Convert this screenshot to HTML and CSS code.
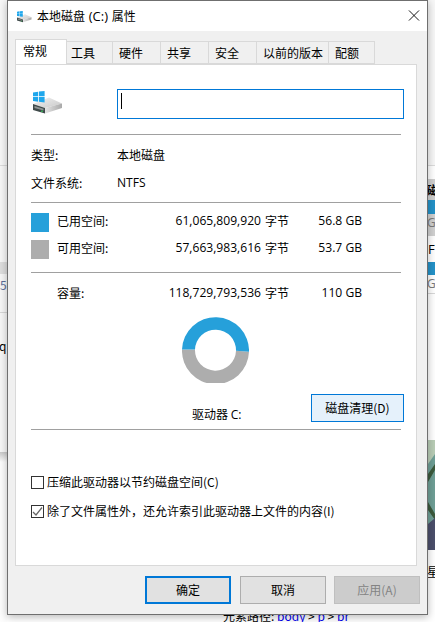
FILE: index.html
```html
<!DOCTYPE html>
<html lang="zh-CN">
<head>
<meta charset="utf-8">
<title>本地磁盘 (C:) 属性</title>
<link rel="stylesheet" href="styles.css">
</head>
<body>
<svg class="defs" width="0" height="0" aria-hidden="true">
  <defs>
    <linearGradient id="topface" x1="0" y1="0" x2="1" y2="1"><stop offset="0" stop-color="#f2f2f2"/><stop offset="1" stop-color="#c9c9c9"/></linearGradient>
    <linearGradient id="sideface" x1="0" y1="0" x2="1" y2="0"><stop offset="0" stop-color="#e4e4e4"/><stop offset="1" stop-color="#a9a9a9"/></linearGradient>
    <symbol id="drive" viewBox="0 0 30 24">
      <path fill="url(#topface)" d="M0 13 16 6.500 29 12.500 12 17z"/>
      <path fill="#3f4a4a" d="M0 13 12 17V22.500L0 19z"/>
      <path fill="#8f9595" d="M1.500 15 10.500 17.800V19.500L1.500 17z"/>
      <path fill="url(#sideface)" d="M12 17 29 12.500V17L12 22.500z"/>
      <path fill="#3aa655" d="M8 19.500h2v1.500H8z"/>
      <path fill="#1fa7ec" d="M0 1.500 5.200.7V5.300H0zM6 .6 11.600 0V5.300H6zM0 6.100H5.200V10.700L0 10zM6 6.100H11.600V11.500L6 10.800z"/>
    </symbol>
  </defs>
</svg>

<div class="backdrop-left">
  <div class="bl-a"></div>
  <div class="bl-b"></div>
  <div class="bl-band"></div>
  <div class="bl-cell"><span class="bl-five">5</span></div>
  <div class="bl-cell2"><span class="bl-q">q</span></div>
  <div class="bl-end"></div>
</div>

<div class="backdrop-right">
  <div class="br-a"></div>
  <div class="br-b"></div>
  <div class="br-head"><span>磁盘</span></div>
  <div class="br-blue br-blue1"></div>
  <div class="br-gb br-gb1"><span>GB</span></div>
  <div class="br-f"><span>F:</span></div>
  <div class="br-blue"></div>
  <div class="br-gb"><span>GB</span></div>
  <div class="br-gap"></div>
  <svg class="br-photo" viewBox="0 0 8 110" preserveAspectRatio="none" aria-hidden="true">
    <rect width="8" height="110" fill="#6f9f96"/>
    <path fill="#b9cdb6" d="M0 0H8V14L0 24z"/>
    <path fill="#3c5a3d" d="M0 34 8 24V30L0 42zM0 62 8 74V80L0 70z"/>
    <path fill="#4b4f6b" d="M0 84 8 78V110H0z"/>
  </svg>
  <div class="br-star"><span>星信</span></div>
</div>

<div class="pathbar">元素路径: <a class="crumb">body</a> &gt; <a class="crumb">p</a> &gt; <a class="crumb">br</a></div>

<main class="window">
  <header class="titlebar">
    <svg class="title-icon" aria-hidden="true"><use href="#drive"/></svg>
    <span class="title-text">本地磁盘 <span class="title-latin">(C:)</span> 属性</span>
    <svg class="close" viewBox="0 0 12 12" aria-hidden="true"><path d="M.5.500 11.500 11.500M11.500.500.500 11.500"/></svg>
  </header>

  <nav class="tabs">
    <div class="tab tab-active">常规</div>
    <div class="tab tab-tools">工具</div>
    <div class="tab">硬件</div>
    <div class="tab">共享</div>
    <div class="tab">安全</div>
    <div class="tab tab-wide">以前的版本</div>
    <div class="tab tab-last">配额</div>
  </nav>

  <section class="panel">
    <div class="head-row">
      <svg class="big-icon" aria-hidden="true"><use href="#drive"/></svg>
      <div class="name-input"><span class="caret"></span></div>
    </div>
    <hr class="rule rule-1">
    <div class="info-row info-first"><span class="info-label">类型:</span><span>本地磁盘</span></div>
    <div class="info-row info-second"><span class="info-label">文件系统:</span><span class="latin">NTFS</span></div>
    <hr class="rule rule-2">
    <div class="stat stat-first">
      <span class="swatch swatch-used"></span><span>已用空间:</span><span class="latin num">61,065,809,920</span><span class="bytes">字节</span><span class="latin gb">56.8 GB</span>
    </div>
    <div class="stat stat-second">
      <span class="swatch swatch-free"></span><span>可用空间:</span><span class="latin num">57,663,983,616</span><span class="bytes">字节</span><span class="latin gb">53.7 GB</span>
    </div>
    <hr class="rule rule-3">
    <div class="stat stat-total">
      <span></span><span>容量:</span><span class="latin num">118,729,793,536</span><span class="bytes">字节</span><span class="latin gb">110 GB</span>
    </div>
    <svg class="donut" viewBox="0 0 67 67" aria-hidden="true">
      <path fill="#adadad" d="M0 33.500H13A20.500 20.500 0 1 0 54 34.800L67 35.800A33.500 33.500 0 0 1 0 33.500z"/>
      <path fill="#26a0da" d="M0 33.500A33.500 33.500 0 0 1 67 35.800L54 34.800A20.500 20.500 0 0 0 13 33.500z"/>
    </svg>
    <div class="drive-row">
      <span class="drive-label">驱动器 <span class="latin">C:</span></span>
      <button class="btn-clean">磁盘清理(D)</button>
    </div>
    <hr class="rule rule-4">
    <label class="check check-first"><span class="box"></span><span class="check-text">压缩此驱动器以节约磁盘空间(C)</span></label>
    <label class="check check-second">
      <span class="box"><svg class="tick" viewBox="0 0 11 11" aria-hidden="true"><path d="M1 6 4 9 10 1.500"/></svg></span>
      <span class="check-text">除了文件属性外，还允许索引此驱动器上文件的内容(I)</span>
    </label>
  </section>

  <footer class="actions">
    <button class="btn btn-default">确定</button>
    <button class="btn">取消</button>
    <button class="btn btn-disabled">应用(A)</button>
  </footer>
</main>
</body>
</html>
```

FILE: styles.css
```css
* { box-sizing: border-box; }
html, body { margin: 0; padding: 0; }
body {
  position: relative;
  width: 435px;
  height: 622px;
  overflow: hidden;
  background: #fff;
  color: #000;
  font: 12px/16px "Noto Sans CJK SC", "Noto Sans", sans-serif;
}
.defs { position: absolute; }
.latin { font-family: "Open Sans", "Noto Sans CJK SC", sans-serif; font-size: 12.1px; }

/* things behind the dialog */
.backdrop-left {
  position: absolute; left: 0; top: 0; width: 7px; height: 622px;
  display: flex; flex-direction: column; overflow: hidden;
  background: #f7f7f7;
}
.bl-a { height: 166px; flex: none; border-bottom: 1px solid #dcdcdc; }
.bl-b { height: 96px; flex: none; }
.bl-band { height: 12px; flex: none; background: #dedede; }
.bl-cell { height: 39px; flex: none; border-bottom: 1px solid #d8d8d8; color: #5a6f9a; line-height: 22px; }
.bl-five { font-size: 12px; }
.bl-cell2 { height: 139px; flex: none; padding-top: 25px; line-height: 16px; overflow: hidden; }
.bl-q { display: block; margin-left: -1px; white-space: nowrap; }
.bl-end { flex: 1; background: linear-gradient(#c9c9c9, #fdfdfd 10px); }

.backdrop-right {
  position: absolute; left: 428px; top: 0; width: 7px; height: 622px;
  display: flex; flex-direction: column; overflow: hidden;
  background: #fff;
}
.br-a { height: 166px; flex: none; background: #f7f7f7; border-bottom: 1px solid #dcdcdc; }
.br-b { height: 13px; flex: none; }
.br-head { height: 21px; flex: none; background: #cfcfcf; line-height: 21px; font-weight: 700; white-space: nowrap; }
.br-head span { display: block; margin-left: -1px; }
.br-blue { height: 13px; flex: none; background: #2492c8; }
.br-gb { height: 18px; flex: none; color: #7a7a7a; line-height: 18px; white-space: nowrap; font-family: "Open Sans", sans-serif; }
.br-gb span { display: block; margin-left: -1px; }
.br-gb1 { height: 22px; background: #d0d0d0; }
.br-f { height: 26px; flex: none; line-height: 26px; font-family: "Open Sans", sans-serif; font-size: 13px; white-space: nowrap; }
.br-gap { height: 147px; flex: none; border-top: 1px solid #d8d8d8; }
.br-blue1 { height: 14px; }
.br-photo { display: block; width: 7px; height: 110px; flex: none; }
.br-star { height: 30px; flex: none; line-height: 44px; white-space: nowrap; }
.br-star span { display: block; margin-left: -1px; }

.pathbar {
  position: absolute; left: 223px; top: 608px;
  line-height: 16px; white-space: nowrap;
}
.crumb { color: #0000ee; text-decoration: underline; }

/* dialog */
.window {
  position: relative;
  margin-left: 7px;
  width: 421px;
  height: 615px;
  background: #f0f0f0;
  border: 1px solid #6f6f6f;
  box-shadow: 0 2px 8px rgba(0, 0, 0, .28);
  display: flex;
  flex-direction: column;
}
.titlebar {
  height: 30px;
  flex: none;
  background: #fff;
  display: flex;
  align-items: center;
  padding-left: 9px;
}
.title-icon { width: 15px; height: 12px; flex: none; margin-top: 1px; }
.title-text { margin-left: 5px; white-space: nowrap; }
.title-latin { padding: 0 1px; font-family: "Open Sans", "Noto Sans CJK SC", sans-serif; font-size: 13px; }
.close { width: 12px; height: 11px; margin-left: auto; margin-right: 7px; margin-top: -1px; }
.close path { stroke: #000; stroke-width: 1; fill: none; }

.tabs {
  display: flex;
  align-items: flex-end;
  height: 24px;
  margin: 9px 0 0 7px;
  position: relative;
  z-index: 1;
  flex: none;
}
.tab {
  width: 48px;
  height: 23px;
  padding: 3px 0 0 6px;
  background: #f0f0f0;
  border: 1px solid #d9d9d9;
  border-left: 0;
  border-bottom: 1px solid #d9d9d9;
  line-height: 16px;
}
.tab-active {
  width: 52px;
  height: 25px;
  padding: 3px 0 0 7px;
  background: #fff;
  border-left: 1px solid #d9d9d9;
  border-bottom: 0;
}
.tab-tools { width: 46px; padding-left: 4px; }
.tab-wide { width: 72px; }
.tab-last { width: 46px; }

.panel {
  width: 402px;
  height: 502px;
  margin-left: 7px;
  padding: 24px 12px 0 15px;
  background: #fff;
  border: 1px solid #d9d9d9;
  flex: none;
}
.head-row { display: flex; height: 30px; }
.big-icon { width: 30px; height: 24px; margin: 2px 0 0 2px; flex: none; }
.name-input {
  margin-left: 54px;
  width: 287px;
  height: 30px;
  border: 1px solid #0078d7;
  padding: 3px 0 0 3px;
}
.caret { display: block; width: 1px; height: 16px; background: #000; }

.rule { margin: 0 3px 0 0; border: 0; height: 1px; background: #a0a0a0; }
.rule-1 { margin-top: 15px; }
.rule-2 { margin-top: 9px; }
.rule-3 { margin-top: 13px; }
.rule-4 { margin-top: 7px; }

.info-row { display: flex; height: 20px; line-height: 20px; }
.info-first { margin-top: 10px; }
.info-second { margin-top: 8px; }
.info-label { width: 86px; flex: none; }

.stat {
  display: grid;
  grid-template-columns: 26px 60px 144px 32px 69px;
  height: 19px;
  line-height: 16px;
  align-items: start;
}
.stat-first { margin-top: 10px; }
.stat-second { margin-top: 8px; }
.stat-total { margin-top: 10px; line-height: 19px; }
.swatch { display: block; width: 18px; height: 19px; }
.swatch-used { background: #26a0da; }
.swatch-free { background: #adadad; }
.num { text-align: right; white-space: nowrap; }
.bytes { padding-left: 4px; }
.gb { text-align: right; white-space: nowrap; }

.donut { display: block; width: 67px; height: 67px; margin: 14px 0 0 151px; }
.drive-row { display: flex; height: 28px; margin-top: 11px; }
.drive-label { align-self: flex-end; margin-left: 161px; margin-bottom: -1px; white-space: nowrap; }
.btn-clean {
  margin-left: auto;
  width: 93px;
  height: 28px;
  padding: 0;
  background: #e5f1fb;
  border: 1px solid #0078d7;
  border-radius: 0;
  color: #000;
  font: inherit;
}

.check { display: flex; align-items: center; white-space: nowrap; height: 13px; }
.check-first { margin-top: 46px; }
.check-second { margin-top: 16px; }
.check-text { margin-top: -2px; }
.box {
  display: block;
  width: 13px;
  height: 13px;
  margin-right: 3px;
  background: #fff;
  border: 1px solid #333;
  flex: none;
}
.tick { display: block; width: 11px; height: 11px; }
.tick path { fill: none; stroke: #666; stroke-width: 1.300; }

.actions {
  display: flex;
  justify-content: flex-end;
  gap: 9px;
  padding: 10px 7px 0 0;
}
.btn {
  width: 86px;
  height: 28px;
  padding: 0;
  background: #e1e1e1;
  border: 1px solid #adadad;
  border-radius: 0;
  color: #000;
  font: inherit;
}
.btn-default { border: 2px solid #0078d7; margin-right: 0; }
.btn-disabled { background: #cccccc; border-color: #bfbfbf; color: #838383; margin-left: -1px; }
```
